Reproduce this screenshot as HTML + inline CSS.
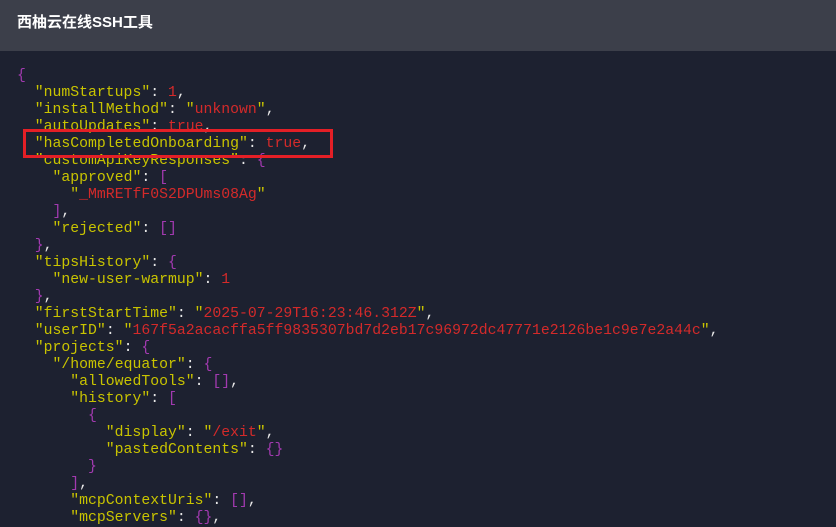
<!DOCTYPE html>
<html><head><meta charset="utf-8"><style>
body{margin:0;width:836px;height:518px;overflow:hidden;background:#1d2130;}
.h{height:51px;background:#3c3f4a;color:#fff;font:bold 15px "Liberation Sans","Noto Sans CJK SC",sans-serif;line-height:46px;padding-left:17px;}
pre{margin:0;position:absolute;left:17px;top:68px;font:14.8px/17px "Liberation Mono",monospace;color:#e8e8e8;}
.k{color:#c9c400}.s{color:#d42a2a}.b{color:#a23ab0}
.box{position:absolute;left:23px;top:129px;width:304px;height:23px;border:3px solid #e41f26;}
</style></head><body>
<div class="h">西柚云在线SSH工具</div>
<pre><span class="b">{</span>
  <span class="k">"numStartups"</span>: <span class="s">1</span>,
  <span class="k">"installMethod"</span>: <span class="k">"</span><span class="s">unknown</span><span class="k">"</span>,
  <span class="k">"autoUpdates"</span>: <span class="s">true</span>,
  <span class="k">"hasCompletedOnboarding"</span>: <span class="s">true</span>,
  <span class="k">"customApiKeyResponses"</span>: <span class="b">{</span>
    <span class="k">"approved"</span>: <span class="b">[</span>
      <span class="k">"</span><span class="s">_MmRETfF0S2DPUms08Ag</span><span class="k">"</span>
    <span class="b">]</span>,
    <span class="k">"rejected"</span>: <span class="b">[]</span>
  <span class="b">}</span>,
  <span class="k">"tipsHistory"</span>: <span class="b">{</span>
    <span class="k">"new-user-warmup"</span>: <span class="s">1</span>
  <span class="b">}</span>,
  <span class="k">"firstStartTime"</span>: <span class="k">"</span><span class="s">2025-07-29T16:23:46.312Z</span><span class="k">"</span>,
  <span class="k">"userID"</span>: <span class="k">"</span><span class="s">167f5a2acacffa5ff9835307bd7d2eb17c96972dc47771e2126be1c9e7e2a44c</span><span class="k">"</span>,
  <span class="k">"projects"</span>: <span class="b">{</span>
    <span class="k">"/home/equator"</span>: <span class="b">{</span>
      <span class="k">"allowedTools"</span>: <span class="b">[]</span>,
      <span class="k">"history"</span>: <span class="b">[</span>
        <span class="b">{</span>
          <span class="k">"display"</span>: <span class="k">"</span><span class="s">/exit</span><span class="k">"</span>,
          <span class="k">"pastedContents"</span>: <span class="b">{}</span>
        <span class="b">}</span>
      <span class="b">]</span>,
      <span class="k">"mcpContextUris"</span>: <span class="b">[]</span>,
      <span class="k">"mcpServers"</span>: <span class="b">{}</span>,
</pre>
<div class="box"></div>
</body></html>
